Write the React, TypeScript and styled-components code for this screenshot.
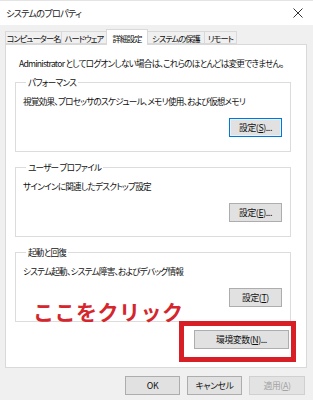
import React from "react";
import styled, { createGlobalStyle } from "styled-components";

const Global = createGlobalStyle`
  html, body { margin: 0; padding: 0; background: #f0f0f0; }
  body {
    font-family: "Noto Sans CJK JP", "Noto Sans", sans-serif;
    font-feature-settings: "palt" 1;
  }
`;

const Root = styled.div`
  position: relative;
  width: 313px;
  height: 400px;
  overflow: hidden;
  background: #f0f0f0;
  font-size: 8.6px;
  letter-spacing: -0.75px;
  color: #1a1a1a;
  border-top: 1px solid #e4e4e4;
  box-sizing: border-box;
`;

const TitleBar = styled.div`
  height: 23px;
  background: #ffffff;
  display: flex;
  align-items: center;
  justify-content: space-between;
  padding: 0 10px 1px 6px;
`;

const Title = styled.span`
  font-size: 9.2px;
  letter-spacing: -0.8px;
  line-height: 14px;
  color: #222;
`;

const Body = styled.div`
  padding: 4px 8px 0 5px;
`;

const TabRow = styled.div`
  display: flex;
  align-items: flex-end;
  height: 15px;
  margin-left: 1px;
  position: relative;
  z-index: 1;
`;

const Tab = styled.div<{ $w: number; $active?: boolean }>`
  box-sizing: border-box;
  width: ${(p) => p.$w}px;
  height: ${(p) => (p.$active ? 16 : 13)}px;
  margin-bottom: ${(p) => (p.$active ? -1 : 0)}px;
  margin-left: -1px;
  display: flex;
  align-items: center;
  justify-content: center;
  overflow: hidden;
  background: ${(p) => (p.$active ? "#ffffff" : "#f0f0f0")};
  border: 1px solid #d9d9d9;
  border-bottom: ${(p) => (p.$active ? "none" : "1px solid #d9d9d9")};
  font-size: 8.2px;
  letter-spacing: -0.9px;
  line-height: 12px;
  white-space: nowrap;
  color: #111;
`;

const Panel = styled.div`
  box-sizing: border-box;
  width: 302px;
  height: 324px;
  background: #ffffff;
  border: 1px solid #d9d9d9;
  padding: 11px 0 0 9px;
`;

const Desc = styled.div`
  line-height: 14px;
  margin-left: 4px;
  white-space: nowrap;
  color: #111;
`;

const Group = styled.fieldset<{ $first?: boolean }>`
  box-sizing: border-box;
  width: 276px;
  margin: ${(p) => (p.$first ? 5 : 8)}px 0 0 0;
  padding: 0 8px 14px 7px;
  border: 1px solid #dcdcdc;
  min-inline-size: 0;
`;

const Legend = styled.legend`
  padding: 0 2px;
  margin-left: 3px;
  line-height: 14px;
  color: #111;
`;

const GroupText = styled.div`
  margin-top: 5px;
  line-height: 14px;
  white-space: nowrap;
  color: #111;
`;

const ButtonRow = styled.div<{ $mt: number; $w?: number }>`
  display: flex;
  justify-content: flex-end;
  gap: 7px;
  margin-top: ${(p) => p.$mt}px;
  ${(p) => (p.$w ? `width: ${p.$w}px;` : "")}
`;

const Button = styled.div<{ $w: number; $focus?: boolean; $disabled?: boolean }>`
  box-sizing: border-box;
  width: ${(p) => p.$w}px;
  height: 19px;
  display: flex;
  align-items: center;
  justify-content: center;
  background: ${(p) => (p.$disabled ? "#e3e3e3" : "#e1e1e1")};
  border: 1px solid
    ${(p) => (p.$focus ? "#0078d7" : p.$disabled ? "#d0d0d0" : "#adadad")};
  box-shadow: ${(p) => (p.$focus ? "inset 0 0 0 1px #e5f1fb" : "none")};
  color: ${(p) => (p.$disabled ? "#a3a3a3" : "#111")};
  font-size: 8.8px;
  letter-spacing: -0.4px;
  line-height: 12px;
  white-space: nowrap;
  u { text-decoration-thickness: 1px; text-underline-offset: 1px; }
`;

const Annotation = styled.div`
  position: absolute;
  left: 33px;
  top: 298px;
  font-family: "Noto Sans CJK JP", sans-serif;
  font-feature-settings: normal;
  font-weight: 700;
  font-size: 21px;
  line-height: 24px;
  letter-spacing: 0.5px;
  color: #d4262c;
  white-space: nowrap;
`;

const Highlight = styled.div`
  position: absolute;
  left: 179px;
  top: 320px;
  width: 117px;
  height: 41px;
  box-sizing: border-box;
  border: 5px solid #d81f26;
`;

const CloseIcon = () => (
  <svg width="10" height="10" viewBox="0 0 10 10">
    <path d="M0.5 0.5 L9.5 9.5 M9.5 0.5 L0.5 9.5" stroke="#333" strokeWidth="1" />
  </svg>
);

export default function App() {
  return (
    <>
      <Global />
      <Root>
        <TitleBar>
          <Title>システムのプロパティ</Title>
          <CloseIcon />
        </TitleBar>
        <Body>
          <TabRow>
            <Tab $w={57}>コンピューター名</Tab>
            <Tab $w={46}>ハードウェア</Tab>
            <Tab $w={42} $active>詳細設定</Tab>
            <Tab $w={58}>システムの保護</Tab>
            <Tab $w={33}>リモート</Tab>
          </TabRow>
          <Panel>
            <Desc>Administrator としてログオンしない場合は、これらのほとんどは変更できません。</Desc>
            <Group $first>
              <Legend>パフォーマンス</Legend>
              <GroupText>視覚効果、プロセッサのスケジュール、メモリ使用、および仮想メモリ</GroupText>
              <ButtonRow $mt={10}>
                <Button $w={53} $focus>設定(<u>S</u>)...</Button>
              </ButtonRow>
            </Group>
            <Group>
              <Legend>ユーザー プロファイル</Legend>
              <GroupText>サインインに関連したデスクトップ設定</GroupText>
              <ButtonRow $mt={10}>
                <Button $w={53}>設定(<u>E</u>)...</Button>
              </ButtonRow>
            </Group>
            <Group>
              <Legend>起動と回復</Legend>
              <GroupText>システム起動、システム障害、およびデバッグ情報</GroupText>
              <ButtonRow $mt={10}>
                <Button $w={53}>設定(<u>T</u>)</Button>
              </ButtonRow>
            </Group>
            <ButtonRow $mt={8} $w={274}>
              <Button $w={95}>環境変数(<u>N</u>)...</Button>
            </ButtonRow>
          </Panel>
          <ButtonRow $mt={8}>
            <Button $w={55}>OK</Button>
            <Button $w={55}>キャンセル</Button>
            <Button $w={56} $disabled>適用(<u>A</u>)</Button>
          </ButtonRow>
        </Body>
        <Annotation>ここをクリック</Annotation>
        <Highlight />
      </Root>
    </>
  );
}
